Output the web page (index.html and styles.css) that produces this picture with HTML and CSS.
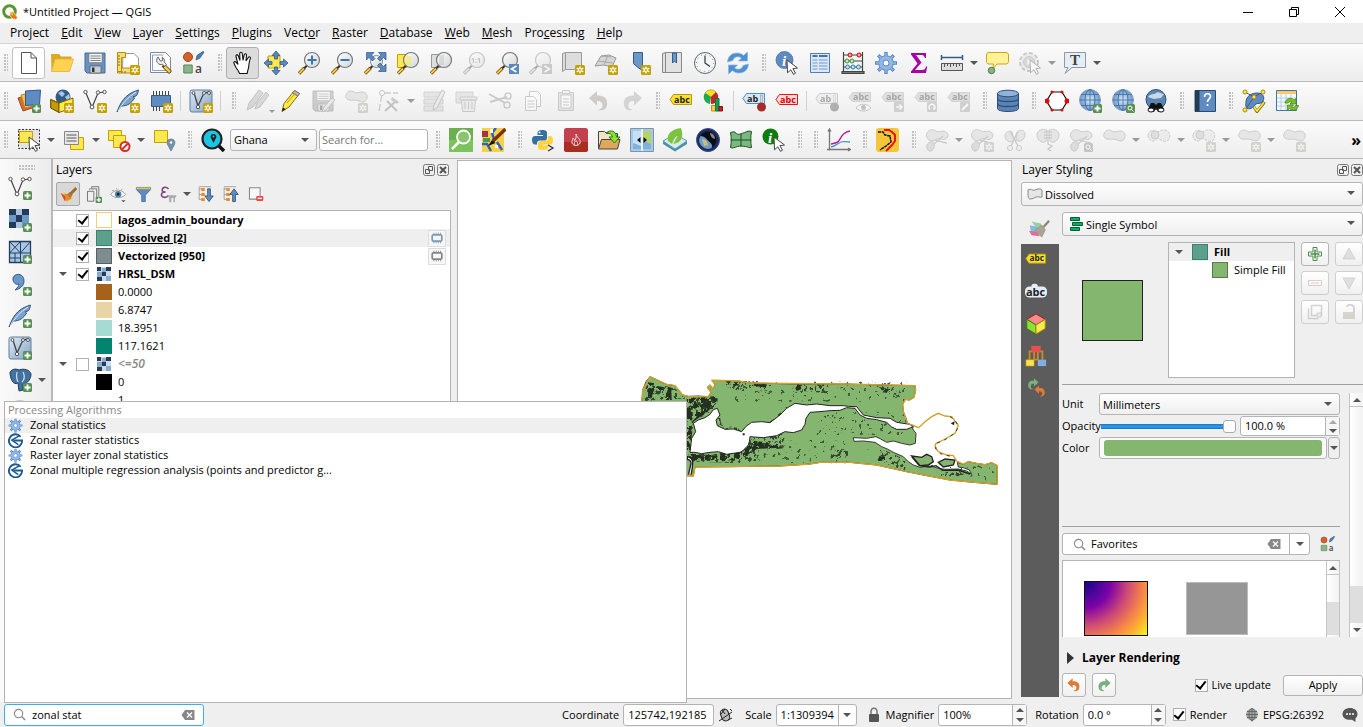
FILE: index.html
```html
<!DOCTYPE html>
<html lang="en">
<head>
<meta charset="utf-8">
<title>*Untitled Project — QGIS</title>
<link rel="stylesheet" href="styles.css">
</head>
<body>
<svg class="paints" aria-hidden="true">
  <defs>
    <linearGradient id="gGlass" x1="0" y1="0" x2="1" y2="1"><stop offset="0" stop-color="#fff"/><stop offset="1" stop-color="#cfd6d8"/></linearGradient>
    <linearGradient id="gBlue" x1="0" y1="0" x2="1" y2="1"><stop offset="0" stop-color="#e3ebf3"/><stop offset="1" stop-color="#7fa3ca"/></linearGradient>
    <radialGradient id="gGlobe"><stop offset="0" stop-color="#e2effc"/><stop offset="1" stop-color="#5f94cf"/></radialGradient>
  </defs>
</svg>
<svg class="sprite" aria-hidden="true">
  <symbol id="b-plus" viewBox="0 0 24 24"><rect x="15" y="15" width="9" height="9" rx="1.5" fill="#5a9056"/><path d="M19.500 16.500v6M16.500 19.500h6" stroke="#fff" stroke-width="1.800"/></symbol>
  <symbol id="b-star" viewBox="0 0 24 24"><rect x="14" y="14" width="10" height="10" rx="1.500" fill="#c4a000"/><path d="M19 15.500v7M15.700 17.200l6.600 3.600M22.300 17.200l-6.600 3.600" stroke="#fff" stroke-width="1.400"/><circle cx="19" cy="19" r="1" fill="#c4a000"/></symbol>
  <symbol id="glass" viewBox="0 0 24 24"><path d="M10 14.500l-3 3" stroke="#333" stroke-width="2.200"/><path d="M7.500 17L2 22.500" stroke="#5c4300" stroke-width="3.200"/><path d="M7 17.500L2.200 22.200" stroke="#f9c440" stroke-width="2"/><circle cx="15" cy="9" r="7.500" fill="url(#gGlass)" stroke="#777" stroke-width="1.200"/></symbol>
  <symbol id="cursor" viewBox="0 0 24 24"><path d="M12 9l10.500 8-4.600.7 2.600 4.500-2 1.200-2.700-4.600-3.300 3z" fill="#fff" stroke="#444"/></symbol>
  <symbol id="new" viewBox="0 0 24 24"><path d="M4.500 1.500h9.500l5.500 5.500v15.500h-15zM14 1.500v5.500h5.500" fill="#fff" stroke="#555"/></symbol>
  <symbol id="open" viewBox="0 0 24 24"><path d="M1 3h8l2 2.500h10.500V8H6L1.500 20z" fill="#d9a928"/><path d="M5 8h18.500L19.500 20.500H1.500z" fill="#ffd351" stroke="#e3b034" stroke-width=".8"/></symbol>
  <symbol id="save" viewBox="0 0 24 24"><path d="M2 2h20v20H4l-2-2z" fill="#6b92bf" stroke="#456c98"/><path d="M6 2.500h13v9H6z" fill="#f4f4f4" stroke="#777" stroke-width=".6"/><path d="M7.500 5h10M7.500 7.300h10M7.500 9.500h10" stroke="#777" stroke-width=".9"/><path d="M7 15h11v7H7z" fill="#c9d0d6" stroke="#555" stroke-width=".7"/><path d="M9 16.500h2.500v4.500H9z" fill="#333"/></symbol>
  <symbol id="layout" viewBox="0 0 24 24"><path d="M7 2.500h11l4.500 4.500v12h-16z" fill="#fff" stroke="#999"/><path d="M1.500 1.500h8v5h-4v14h-4zM5.500 17h13v5h-17v-5" fill="#f7dd77" stroke="#b28b15"/><path d="M2 5h2M2 8h2M2 11h2M2 14h2M6 20v2M9 20v2" stroke="#8a6a10"/></symbol>
  <symbol id="layoutmgr" viewBox="0 0 24 24"><path d="M1.500 1.500h15l5 5v15h-20z" fill="#fff" stroke="#888"/><path d="M3.500 4h11M3.500 4v15.500h15.500" stroke="#7fa2ce" fill="none"/><path d="M14 14l7.500 7.500" stroke="#5c4300" stroke-width="4"/><path d="M15.500 15.500l5.500 5.500" stroke="#f2c75c" stroke-width="2.500"/><path d="M9 6a4.500 4.500 0 0 0 2 7.500c1 .3 1.600 0 2.300-.4l2.200 2.200 2-2-2.300-2.300c.6-2-.2-4-2-4.800l.3 3.300-2 .6z" fill="#eee" stroke="#666"/></symbol>
  <symbol id="style" viewBox="0 0 24 24"><circle cx="6" cy="6" r="4.500" fill="#d4622c" stroke="#a8451a"/><path d="M1.800 14h8.400v8H1.800z" fill="#8ab58a" stroke="#56875a"/><path d="M14 9l4-2 4-6-1-.5-6 4z" fill="#4d7db1" stroke="#335b87" stroke-width=".8"/><text x="13" y="22" class="gl-a">a</text></symbol>
  <symbol id="hand" viewBox="0 0 24 24"><path d="M8.500 22.500c-.5-2-2-3.500-3.500-6L3 12.500c-.8-1.600 1-2.600 2.200-1.200L7 13.500 5 5.500c-.4-1.800 1.700-2.300 2.300-.6L9 9.500 8.700 2.700c0-1.900 2.400-1.900 2.600 0L12 9.300l1.200-5.500c.4-1.700 2.500-1.300 2.300.4L15 10l2.300-3.500c.9-1.400 2.600-.4 2 1.100-1.300 3.400-1.300 5-1.600 8-.2 2.600-1.200 4-1.500 6.900z" fill="#fff" stroke="#111" stroke-width="1.100"/></symbol>
  <symbol id="panall" viewBox="0 0 24 24"><path d="M4 5h12v12H4z" fill="#fce94f" stroke="#c4a000"/><path d="M12 0l4 4.500h-2.500V8h-3V4.500H8zM12 24l4-4.500h-2.500V16h-3v3.500H8zM0 12l4.500-4v2.500H8v3H4.500V16zM24 12l-4.500-4v2.500H16v3h3.500V16z" fill="#5b88bd" stroke="#2f5a8c" stroke-width=".8"/></symbol>
  <symbol id="zin" viewBox="0 0 24 24"><use href="#glass"/><path d="M15 4.500v9M10.500 9h9" stroke="#3f74ae" stroke-width="2"/></symbol>
  <symbol id="zout" viewBox="0 0 24 24"><use href="#glass"/><path d="M10.500 9h9" stroke="#3f74ae" stroke-width="2"/></symbol>
  <symbol id="zfull" viewBox="0 0 24 24"><path d="M10 14.500L7 17.500" stroke="#333" stroke-width="2.200"/><path d="M7.500 17L2 22.500" stroke="#5c4300" stroke-width="3.200"/><path d="M7 17.500L2.200 22.200" stroke="#f9c440" stroke-width="2"/><circle cx="13.500" cy="10.500" r="6" fill="url(#gGlass)" stroke="#888"/><path d="M3.500 1.500H11L8.500 4l3.500 3.500-2.500 2.500L6 6.500 3.500 9zM23 1.500h-7.500L18 4l-3.500 3.500L17 10l3.500-3.500L23 9zM23 20.500h-7.500L18 18l-3.500-3.500L17 12l3.500 3.500L23 13z" fill="#5b88bd" stroke="#2f5a8c" stroke-width=".7"/></symbol>
  <symbol id="zsel" viewBox="0 0 24 24"><path d="M1.500 3.500h9v13h-9z" fill="#fce94f" stroke="#c4a000"/><use href="#glass"/><path d="M9 5h6v9.500a7 7 0 0 1-6-2z" fill="#fce94f" opacity=".6"/></symbol>
  <symbol id="zlay" viewBox="0 0 24 24"><path d="M2.500 3.500h9v13h-9z" fill="#ddd" stroke="#999"/><use href="#glass"/><path d="M10 4h5v10h-5z" fill="#ccc" opacity=".6"/></symbol>
  <symbol id="znat" viewBox="0 0 24 24"><use href="#glass"/><text x="9" y="12" class="gl-s">1:1</text></symbol>
  <symbol id="zlast" viewBox="0 0 24 24"><use href="#glass"/><path d="M14 13h10v10H14z" fill="#5b88bd"/><path d="M21.500 15l-5 3 5 3" fill="none" stroke="#fff" stroke-width="1.600"/></symbol>
  <symbol id="znext" viewBox="0 0 24 24"><use href="#glass"/><path d="M14 13h10v10H14z" fill="#888"/><path d="M16.500 15l5 3-5 3" fill="none" stroke="#fff" stroke-width="1.600"/></symbol>
  <symbol id="mapview" viewBox="0 0 24 24"><path d="M1.500 2.500l3-1h16v17h-16l-3 2z" fill="#ddd" stroke="#999"/><path d="M4.500 1.500v17" stroke="#999"/></symbol>
  <symbol id="map3d" viewBox="0 0 24 24"><path d="M1 15L7 5l8-1 7 3-4 9-8-2z" fill="#d5d5d5" stroke="#999"/><path d="M4 10l15 2M10 14l4-10M7 5l10 1" stroke="#aaa" fill="none"/></symbol>
  <symbol id="bmnew" viewBox="0 0 24 24"><path d="M6.500 1.500h9v18l-4.500-3-4.500-4z" fill="#6b97c9" stroke="#335b87"/></symbol>
  <symbol id="bms" viewBox="0 0 24 24"><path d="M2.500 2.500l3-1h16v20h-19zM5.500 1.500v20" fill="#e2e2e2" stroke="#888"/><path d="M12.500 2h4v10l-2-2-2 2z" fill="#6b97c9" stroke="#335b87"/></symbol>
  <symbol id="clock" viewBox="0 0 24 24"><circle cx="12" cy="12" r="10.500" fill="#f4f7f7" stroke="#666"/><circle cx="12" cy="12" r="8.500" fill="none" stroke="#5b88bd" stroke-dasharray="1 3.450"/><path d="M12 4.500V12l5 3.500" fill="none" stroke="#333" stroke-width="1.200"/></symbol>
  <symbol id="refresh" viewBox="0 0 24 24"><path d="M1.500 11C2 5 6 2 11 2c3 0 5 1 6.500 2.500L21.500 1v9h-9l3-3C12 4.500 7.500 6 7 9.500zM22.500 13c-.5 6-4.500 9-9.500 9-3 0-5-1-6.500-2.500L2.500 23v-9h9l-3 3c3.500 2.500 8 1 8.500-2.500z" fill="#4e8fd0" stroke="#8db7e0" stroke-width=".7"/></symbol>
  <symbol id="info" viewBox="0 0 24 24"><circle cx="9.500" cy="9" r="8.500" fill="#5d8abf" stroke="#456c98" stroke-width=".7"/><text x="7" y="15" class="gl-i">i</text><use href="#cursor"/></symbol>
  <symbol id="table" viewBox="0 0 24 24"><path d="M2.500 2.500h19v19h-19z" fill="#dce8f5" stroke="#4f7fb5"/><path d="M4.500 5h5M11 5h8.500" stroke="#3f74ae" stroke-width="2"/><path d="M4.500 9h5M4.500 12h5M4.500 15h5M4.500 18h5M11 9h8.500M11 12h8.500M11 15h8.500M11 18h8.500" stroke="#6d9bd0" stroke-width="1.200"/></symbol>
  <symbol id="abacus" viewBox="0 0 24 24"><path d="M2.500 1v20M21.500 1v20M1 20.500h22v2H1zM2 4h20M2 10h20M2 16h20" fill="#777" stroke="#444" stroke-width="1.200"/><g fill="#f5a9a9" stroke="#c00"><circle cx="9" cy="4" r="2"/><circle cx="18" cy="4" r="2"/></g><g fill="#c5ecc5" stroke="#3b8b3b"><circle cx="6" cy="10" r="2"/><circle cx="11" cy="10" r="2"/></g><g fill="#bfe3f5" stroke="#2c7ba0"><circle cx="6.500" cy="16" r="2"/><circle cx="12" cy="16" r="2"/><circle cx="17.500" cy="16" r="2"/></g></symbol>
  <symbol id="gear" viewBox="0 0 24 24"><g stroke="#5b88bd" stroke-width="3.400"><path d="M12 1v22M1 12h22M4.200 4.200l15.600 15.600M19.800 4.200L4.200 19.800" /></g><circle cx="12" cy="12" r="7.300" fill="#8fb8e8" stroke="#5b88bd"/><g stroke="#8fb8e8" stroke-width="1.500"><path d="M12 2v20M2 12h20M5 5l14 14M19 5L5 19"/></g><circle cx="12" cy="12" r="3" fill="#fff" stroke="#5b88bd"/></symbol>
  <symbol id="sigma" viewBox="0 0 24 24"><path d="M4 2h15v5h-1.200C17.300 4.800 16.500 4 14.500 4H9l5.500 7.500L8 19h7c2.500 0 3.300-.8 4-3.500h1.200L19 22H4v-1.500l6.500-8L4 3.500z" fill="#a800a8"/></symbol>
  <symbol id="measure" viewBox="0 0 24 24"><path d="M1.500 6.500h21M1.500 4v5M22.500 4v5" stroke="#335b87" stroke-width="1.500"/><path d="M1.500 12.500h21v7h-21z" fill="#ddd" stroke="#555"/><path d="M4.500 13v3M7.500 13v2M10.500 13v3M13.500 13v2M16.500 13v3M19.500 13v2" stroke="#555"/></symbol>
  <symbol id="tip" viewBox="0 0 24 24"><path d="M4 1.500h17c1.500 0 2.500 1 2.500 2.500v6.500c0 1.500-1 2.500-2.500 2.500h-9l-4 5 .5-5H4c-1.500 0-2.500-1-2.500-2.500V4c0-1.500 1-2.500 2.500-2.500z" fill="#fdf19a" stroke="#c9a90f"/><circle cx="6.500" cy="19.500" r="3.200" fill="#85b585" stroke="#4d784f"/></symbol>
  <symbol id="action" viewBox="0 0 24 24"><circle cx="11" cy="11" r="9" fill="#ddd" stroke="#888" stroke-width="2" stroke-dasharray="4 2"/><circle cx="11" cy="11" r="5.500" fill="#aaa" stroke="#888"/><path d="M9.500 8l5 3-5 3z" fill="#fff"/><use href="#cursor"/></symbol>
  <symbol id="textann" viewBox="0 0 24 24"><path d="M1.500 1.500h21v15H9l-7 6 3-6H1.500z" fill="#e6eef5" stroke="#8a9aa8"/><text x="7" y="14" class="gl-t">T</text></symbol>
  <symbol id="dsm" viewBox="0 0 24 24"><path d="M1 9l13-4 4 13-12 4z" fill="#d96b2f" stroke="#a04616"/><path d="M4 6l14-3 3 13-13 3z" fill="#f4c542" stroke="#b08b1c"/><path d="M8.500 2l15-1-1 14.500-14 1z" fill="#5e8cc2" stroke="#335b87"/></symbol>
  <symbol id="gpkg" viewBox="0 0 24 24"><circle cx="13" cy="8" r="7.500" fill="#335b87"/><path d="M8 4l4-2 3 3-3 3zM15 8l4-3 1 4-3 2z" fill="#a8c6e8"/><path d="M.7 10.500L9 14v9.500L.7 19z" fill="#c79a00" stroke="#5a4600"/><path d="M9 14l14-5v9.500l-14 5z" fill="#fce94f" stroke="#7c6400"/><path d="M.7 10.500L9 14l6-2.500" fill="none" stroke="#7c6400"/></symbol>
  <symbol id="vec" viewBox="0 0 24 24"><path d="M2.500 3L9 18.500 15 4l6-1" fill="none" stroke="#444" stroke-width="1.200"/><g fill="#fff" stroke="#555"><circle cx="2.500" cy="3" r="1.700"/><circle cx="9" cy="18" r="1.900"/><circle cx="15" cy="3.500" r="1.700"/><circle cx="21.500" cy="3" r="1.700"/></g></symbol>
  <symbol id="feather" viewBox="0 0 24 24"><path d="M1 23C4 15 8 5 22.500 1c-.5 2-.5 4-2.500 6l-3 .8 1.600 1.200c-3 5-7 8-13 8z" fill="#7ba1cd" stroke="#31557f"/><path d="M2 22C7 14 12 8 20 3" stroke="#dfe9f4" fill="none"/></symbol>
  <symbol id="chip" viewBox="0 0 24 24"><path d="M4.500 2v5M7.500 2v5M10.500 2v5M13.500 2v5M16.500 2v5M19.500 2v5M4.500 17v5M7.500 17v5M10.500 17v5" stroke="#444"/><path d="M2.500 6.500h19v11h-19z" fill="#5e8cc2" stroke="#335b87"/></symbol>
  <symbol id="vbox" viewBox="0 0 24 24"><rect x="1" y="1" width="22" height="22" rx="2" fill="url(#gBlue)" stroke="#5f7f9f"/><path d="M5 4L9 17 15 4l5-1" fill="none" stroke="#444" stroke-width="1.300"/><g fill="#fff" stroke="#555"><circle cx="4.500" cy="4" r="1.500"/><circle cx="9" cy="18" r="1.700"/><circle cx="15" cy="4" r="1.500"/><circle cx="20" cy="4" r="1.500"/></g></symbol>
  <symbol id="pencils" viewBox="0 0 24 24"><path d="M2 21l2-7L14 1l4 3L8 18zM10 20l2-6 9-11 3 3-9 12z" fill="#aaa" stroke="#777"/></symbol>
  <symbol id="pencil" viewBox="0 0 24 24"><path d="M4 22.500l2-8L16.500 1.500l5 3L11 18z" fill="#fce94f" stroke="#8a7100"/><path d="M16.500 1.500l5 3-2 2.500-5-3z" fill="#bbb" stroke="#777"/><path d="M9 14L17.500 4" stroke="#c4a000"/><path d="M4 22.500l1-4 2.800 1.700z" fill="#222"/></symbol>
  <symbol id="savedit" viewBox="0 0 24 24"><use href="#save"/><path d="M11 23l2-5 8-9 3 2-9 10z" fill="#ddd" stroke="#777"/></symbol>
  <symbol id="blob" viewBox="0 0 24 24"><path d="M2 6c1-4 5-5 8-3s5 0 8 0 6 2 5 6-4 5-8 3-7 0-10-1-4-3-3-5z" fill="#ccc" stroke="#888"/></symbol>
  <symbol id="vtool" viewBox="0 0 24 24"><path d="M5 5L2 22M6 4h15" stroke="#888" stroke-width="1.300" stroke-dasharray="8 2"/><circle cx="5" cy="4" r="2.500" fill="#fff" stroke="#777"/><path d="M10 12l10 10M19 12L8 22" stroke="#777" stroke-width="2"/><path d="M15 8l7 5-2 2-6-4z" fill="#888"/></symbol>
  <symbol id="medit" viewBox="0 0 24 24"><path d="M2 3h19v5H2zM2 10h19v5H2zM2 17h19v5H2z" fill="#ccc" stroke="#999"/><path d="M11 21l1-5L20 1l3 2-8 16z" fill="#ddd" stroke="#777"/></symbol>
  <symbol id="trash" viewBox="0 0 24 24"><path d="M1 3h17v11H1z" fill="#ccc" stroke="#999"/><path d="M5 8h17v3H5zM6.500 11h14l-1 11.500h-12z" fill="#ddd" stroke="#888"/><path d="M10 13v7M13.500 13v7M17 13v7" stroke="#888"/></symbol>
  <symbol id="cut" viewBox="0 0 24 24"><path d="M1 5l16 9M2 13l17-5" stroke="#888" stroke-width="2"/><circle cx="20" cy="7" r="3" fill="none" stroke="#888" stroke-width="1.500"/><circle cx="19" cy="16" r="3" fill="none" stroke="#888" stroke-width="1.500"/></symbol>
  <symbol id="copy" viewBox="0 0 24 24"><path d="M8.500 2.500h8l3 3v12h-11z" fill="#fff" stroke="#888"/><path d="M4.500 7.500h8l3 3v11h-11zM6.500 12h7M6.500 15h7M6.500 18h7" fill="#fff" stroke="#888"/></symbol>
  <symbol id="paste" viewBox="0 0 24 24"><path d="M4.500 3.500h15v18h-15z" fill="#ccc" stroke="#888"/><path d="M7 6h10v13H7zM9 10h6M9 13h6M9 16h6" fill="#fff" stroke="#888"/><path d="M8.500 1.500h7v3h-7z" fill="#eee" stroke="#888"/></symbol>
  <symbol id="undo" viewBox="0 0 24 24"><path d="M10 2v4.500c7-.5 11 3 10 9.500-1 5-5 6-9 5 4-1 5-3 4.500-5.500S13 11.500 10 12v4.500L2 9z" fill="#e07b35"/></symbol>
  <symbol id="redo" viewBox="0 0 24 24"><path d="M14 2v4.500C7 6 3 9.500 4 16c1 5 5 6 9 5-4-1-5-3-4.500-5.500S11 11.500 14 12v4.500L22 9z" fill="#79b07e"/></symbol>
  <symbol id="tag" viewBox="0 0 24 24"><path d="M1 10.500l3.500-5h18v10h-18z" fill="#f8e02c" stroke="#b79a08"/><text x="5" y="13.500" class="gl-abc">abc</text></symbol>
  <symbol id="tagred" viewBox="0 0 24 24"><path d="M1 10.500l3.500-5h18v10h-18z" fill="#fdd" stroke="#e11"/><text x="5" y="13.500" class="gl-abc gl-red">abc</text></symbol>
  <symbol id="tagpin" viewBox="0 0 24 24"><path d="M1 9.500l3.500-5h18v10h-18z" fill="#d6e7fb" stroke="#4b8edb"/><text x="5" y="12.500" class="gl-abc">ab</text><path d="M18.500 6h2v9h-2z" fill="#ddd" stroke="#888" stroke-width=".5"/><circle cx="19.500" cy="18" r="4.500" fill="#a62c2c"/></symbol>
  <symbol id="taggrey" viewBox="0 0 24 24"><path d="M1 8.500l3.500-5h18v9h-18z" fill="#bbb" stroke="#999"/><text x="5" y="11" class="gl-abc">abc</text><rect x="13" y="13" width="10" height="10" rx="1" fill="#999"/></symbol>
  <symbol id="tagmove" viewBox="0 0 24 24"><use href="#taggrey"/><path d="M15 18h6M18.500 15.500L21 18l-2.500 2.500" stroke="#fff" fill="none" stroke-width="1.500"/></symbol>
  <symbol id="tagrot" viewBox="0 0 24 24"><use href="#taggrey"/><path d="M16 20.500a3 3 0 1 1 4 0M20 20.500v-3" stroke="#fff" fill="none" stroke-width="1.400"/></symbol>
  <symbol id="tagedit" viewBox="0 0 24 24"><use href="#taggrey"/><path d="M15 21l6-6" stroke="#fff" stroke-width="2"/></symbol>
  <symbol id="tageye" viewBox="0 0 24 24"><path d="M1 8.500l3.500-5h18v9h-18z" fill="#bbb" stroke="#999"/><text x="5" y="11" class="gl-abc">abc</text><path d="M8 19c4-5 11-5 15 0-4 4-11 4-15 0z" fill="#fff" stroke="#777"/><circle cx="15.500" cy="18.500" r="2.500" fill="#777"/></symbol>
  <symbol id="pie" viewBox="0 0 24 24"><path d="M9 8L3 4a7 7 0 0 1 11-1z" fill="#f7e326" stroke="#8a7a00" stroke-width=".5"/><path d="M9 8L3 4a7 7 0 0 0 5 11z" fill="#20a850"/><path d="M9 8l5-5a7 7 0 0 1-5 12z" fill="#c22"/><path d="M9.500 16.500h4V22h-4z" fill="#fc3" stroke="#d38b00"/><path d="M13.500 9.500h3.500V22h-3.500z" fill="#13a04a" stroke="#075"/><path d="M17 17.500h3.500V22H17z" fill="#c22" stroke="#811"/></symbol>
  <symbol id="db" viewBox="0 0 24 24"><path d="M1.500 4.500v15c0 4 21 4 21 0v-15" fill="#5b84b5" stroke="#2c4f7a"/><ellipse cx="12" cy="4.500" rx="10.500" ry="3.300" fill="#93b4da" stroke="#2c4f7a"/><path d="M1.500 9.500c0 4 21 4 21 0M1.500 14.500c0 4 21 4 21 0" fill="none" stroke="#2c4f7a" stroke-width="1.300"/></symbol>
  <symbol id="hex" viewBox="0 0 24 24"><path d="M7 3h10l5.500 9L17 21H7L1.500 12z" fill="#fff" stroke="#111" stroke-width="1.200"/><g fill="#e00"><circle cx="7" cy="3" r="1.500"/><circle cx="17" cy="3" r="1.500"/><circle cx="22" cy="12" r="2.500"/><circle cx="17" cy="21" r="1.500"/><circle cx="7" cy="21" r="1.500"/><circle cx="2" cy="12" r="2.500"/></g></symbol>
  <symbol id="globe" viewBox="0 0 24 24"><circle cx="12" cy="11" r="10.500" fill="url(#gGlobe)" stroke="#9aa7b5"/><ellipse cx="12" cy="11" rx="5" ry="10.500" fill="none" stroke="#47729f"/><path d="M12 .5v21M1.500 11h21M3 5.500h18M3 16.500h18" stroke="#47729f" stroke-width=".9"/></symbol>
  <symbol id="b-mag" viewBox="0 0 24 24"><rect x="15" y="15" width="9" height="9" rx="1.500" fill="#5a9056"/><circle cx="19" cy="19" r="2" fill="none" stroke="#fff"/><path d="M20.500 20.500l2 2" stroke="#fff"/></symbol>
  <symbol id="binoc" viewBox="0 0 24 24"><circle cx="12" cy="10.500" r="10" fill="#5b84b5" stroke="#2c4f7a"/><path d="M4 8c3-4 6-2 8-4s5 1 8 1l-3 4-7 1z" fill="#c9d8e8"/><path d="M4 20l3-6h3l2 2 2-2h3l3 6-2 3h-4l-2-4-2 4H6z" fill="#111"/><ellipse cx="7" cy="21" rx="3" ry="2" fill="#fff" stroke="#111"/><ellipse cx="17" cy="21" rx="3" ry="2" fill="#fff" stroke="#111"/></symbol>
  <symbol id="help" viewBox="0 0 24 24"><path d="M2 1.500h20.500v21H2z" fill="#5e8cc2" stroke="#2f4a66"/><path d="M2 1.500h4.500v21H2z" fill="#233b55"/><path d="M11.500 8c0-4.500 6-4 6-.7 0 2.500-3 2.500-3 5.700M14.500 15v2" fill="none" stroke="#fff" stroke-width="1.700"/></symbol>
  <symbol id="topo" viewBox="0 0 24 24"><path d="M4 13c0-6 6-9 11-9 6 0 8 4 6 8s-6 1-8 4-6 5-8 3-1-4-1-6z" fill="#5e8cc2" stroke="#335b87"/><path d="M3 3l9 5 9-5M12 8L3 21" fill="none" stroke="#557"/><g fill="#fce94f" stroke="#a98c00"><circle cx="3" cy="3" r="2"/><circle cx="21" cy="3" r="2"/><circle cx="12" cy="8" r="2"/><circle cx="3" cy="21" r="2"/></g><path d="M12 18l3 4.500L22.500 13" fill="none" stroke="#8a7100" stroke-width="3"/><path d="M12 18l3 4L22 13.500" fill="none" stroke="#fce94f" stroke-width="1.500"/></symbol>
  <symbol id="reload" viewBox="0 0 24 24"><path d="M1.500 1.500h20v20h-20z" fill="#f4f9fd" stroke="#3f74ae"/><path d="M2 2h19v3H2z" fill="#ffc66b"/><path d="M6 5v16M11 5v16M16 5v16M2 9h19M2 13h19M2 17h19" stroke="#b8cfe6"/><path d="M10 14c1-5 6-6 9-3l2-1.500V15h-6l2-2c-2-1-3-.5-4 1zM23.500 16.500c-1 5-6 6-9 3l-2 2V16h6l-2 2c2 1 3 .5 4-1.500z" fill="#7cc32b" stroke="#3f7d0a" stroke-width=".7"/></symbol>
  <symbol id="selrect" viewBox="0 0 24 24"><path d="M1.500 1.500h21v19h-21z" fill="#e4e4e4" stroke="#333" stroke-dasharray="2 1.500"/><path d="M2.500 3.500h13v11h-13z" fill="#fce94f" stroke="#c4a000"/><use href="#cursor"/></symbol>
  <symbol id="selform" viewBox="0 0 24 24"><path d="M8.500 9.500h13v12h-13z" fill="#fce94f" stroke="#c4a000"/><path d="M2.500 3.500h14v13h-14z" fill="#e8e8e8" stroke="#888"/><path d="M4.500 7h10M4.500 10h10M4.500 13h10" stroke="#888" stroke-width="1.500"/></symbol>
  <symbol id="desel" viewBox="0 0 24 24"><path d="M1.500 2.500h13v10h-13z" fill="#fce94f" stroke="#c4a000"/><path d="M6.500 7.500h12v12h-12z" fill="#fce94f" stroke="#c4a000"/><circle cx="18" cy="18.500" r="4.500" fill="#fff" stroke="#dc2a2a" stroke-width="2"/><path d="M15 21.500l6-6" stroke="#dc2a2a" stroke-width="2"/></symbol>
  <symbol id="selloc" viewBox="0 0 24 24"><path d="M2.500 2.500h13v12h-13z" fill="#fce94f" stroke="#c4a000"/><path d="M19 11c3.500 0 4.500 3 3.500 5.500L19 23l-3.500-6.500C14.500 14 15.500 11 19 11z" fill="#7393ab" stroke="#4e6c84" stroke-width=".6"/><circle cx="19" cy="14.500" r="1.300" fill="#fff"/></symbol>
  <symbol id="osmsearch" viewBox="0 0 24 24"><path d="M17 17l6 6" stroke="#111" stroke-width="3.500"/><circle cx="11" cy="11" r="9.500" fill="#1cc5e3" stroke="#222" stroke-width="2.200"/><path d="M12.500 6c2.500 0 3.500 2.500 2.500 4l-2.500 5-2.500-5c-1-1.500 0-4 2.500-4z" fill="#222"/><circle cx="12.500" cy="8.500" r="1" fill="#1cc5e3"/></symbol>
  <symbol id="gsearch" viewBox="0 0 24 24"><path d="M0 0h24v24H0z" fill="#6ab04c"/><path d="M0 12h24v12H0z" fill="#89cf6b" opacity=".6"/><path d="M10 14l-7 7" stroke="#fff" stroke-width="2.500"/><circle cx="14.500" cy="9" r="6.500" fill="#8ac46f" stroke="#fff" stroke-width="1.800"/></symbol>
  <symbol id="osm" viewBox="0 0 24 24"><path d="M0 0h22v24H0z" fill="#f6d24a"/><path d="M0 3h6v6H0z" fill="#a3344d"/><path d="M1 10h7v4H1z" fill="#4b9a54"/><path d="M14 0l-4 5 2 6M0 16h5l4 7M15 14l5 8" fill="none" stroke="#2b63c4" stroke-width="2.500"/><path d="M8 1h3v4H8zM13 17h3v3h-3z" fill="#fff"/><path d="M11 13L23.500 1" stroke="#7c3212" stroke-width="3.500"/><path d="M6 18l4-6 3.500 3z" fill="#111"/></symbol>
  <symbol id="python" viewBox="0 0 24 24"><path d="M11 2c4 0 5 1 5 3v5c0 2-1 2.500-3 2.500H9c-2 0-3 1-3 3v1H4c-2 0-3-2-3-4.500S2 8 4 8h8V7H6.500V4.500C6.500 3 8 2 11 2z" fill="#3670a3"/><path d="M12 22c-4 0-5-1-5-3v-3c0-2 1-3 3-3h4c2 0 3-1 3-3V8h2c2 0 3 2 3 4.500s-1 4-3 4h-7v1h5V20c0 1-2 2-5 2z" fill="#ffd43b"/><circle cx="8.500" cy="4.500" r="1" fill="#fff"/><path d="M17 17l5 3-5 3" stroke="#333" fill="none" stroke-width="1.300"/></symbol>
  <symbol id="flame" viewBox="0 0 24 24"><rect width="24" height="24" rx="2.500" fill="#c3404f"/><path d="M0 14h24v7.500c0 1.500-1 2.500-2.500 2.500h-19C1 24 0 23 0 21.500z" fill="#a92d21"/><path d="M12 6c1 4 5 5 4 9-.7 3-7 3.500-8 0-.5-2 1-3 1-5 1 .6 1.500 1.500 1.500 2.500C12 11 12.500 9 12 6zM12 12.500c-2.500 2.500-2 5 0 5s2.500-2 0-5z" fill="none" stroke="#f7dcd8"/></symbol>
  <symbol id="folderg" viewBox="0 0 24 24"><path d="M1.500 3.500h6l2 2h11v14h-19z" fill="#f0e6c4" stroke="#444"/><path d="M4.500 11.500h18.500l-2.500 9.500h-19z" fill="#e0a75a" stroke="#444"/><path d="M9 5c5-4 10-2 10.500 4H23l-5.500 6L12 9h3.500C15 6 12 4.500 9 5z" fill="#8ae234" stroke="#2d7a0a"/></symbol>
  <symbol id="swipe" viewBox="0 0 24 24"><path d="M.5.500h23v23H.5z" fill="#a9c8e6" stroke="#7b95ac"/><path d="M3 3h8v18H3z" fill="#c5e0f5"/><path d="M13 3h8v18h-8z" fill="#b5d468"/><path d="M3 15l8 3v3H3zM13 12l8 4v5h-8z" fill="#7fb2db"/><path d="M12 1v22" stroke="#fff" stroke-width="1.500"/><path d="M10.500 9v6L7 12zM13.500 9v6l3.500-3z" fill="#111"/></symbol>
  <symbol id="leaf" viewBox="0 0 24 24"><path d="M0 16l12 7.500L24 16v-2l-12-3-12 3z" fill="#4b8fa8"/><path d="M0 13l12 8 12-8-12-7z" fill="#d8ecee" stroke="#5a9cae"/><path d="M5 13C3 5 10 1 18 0c3 8 1 15-8 16 2-3 3-5 5-9-4 3-5 6-6 9z" fill="#7fc241"/></symbol>
  <symbol id="earth" viewBox="0 0 24 24"><circle cx="12" cy="12" r="11.500" fill="#1d2a5c" stroke="#3d4f8a"/><circle cx="12" cy="12" r="8.500" fill="#0b0d16"/><path d="M4.500 8a8.500 8.500 0 0 0 11 12c2-3-1-5-3-7s-4-5-8-5z" fill="#6a9cc9"/><path d="M6 11l4 1 2 5-4 1z" fill="#d3bd6d"/><path d="M14 5c3 0 5 3 5 6-2 0-5-3-5-6z" fill="#888"/></symbol>
  <symbol id="bowtie" viewBox="0 0 24 24"><path d="M1.500 4.500c3-1 4-1 6 1s5 0 8-1 4-2 7-1c-1 5-1 11 0 16-2 1-4-1-6-1-3 0-5-1-8 0s-5 2-7 1c1-5 1-10 0-15z" fill="#79b87e" stroke="#234d28"/><path d="M1.500 12h21M12 5.500v13" stroke="#234d28"/></symbol>
  <symbol id="ginfo" viewBox="0 0 24 24"><circle cx="8.500" cy="8.500" r="8" fill="#0d7d0d"/><text x="6" y="14.500" class="gl-i">i</text><use href="#cursor"/></symbol>
  <symbol id="plot" viewBox="0 0 24 24"><path d="M2.500 1v21.500M0 21.500h23M1 3.500l1.500-2.500L4 3.500M21 20l2.500 1.500L21 23" fill="none" stroke="#777" stroke-width="1.300"/><path d="M4 16c5-1 7-1 9-5s4-7 10-8" fill="none" stroke="#b3189b" stroke-width="1.500"/><path d="M4 19c5-1 7-4 10-5s4 0 9 0" fill="none" stroke="#4a9ac4" stroke-width="1.300"/></symbol>
  <symbol id="path" viewBox="0 0 24 24"><rect width="23" height="24" rx="3" fill="#f6c63a"/><path d="M8 2h5l3 2 3 3v6l-3 4-6 6" fill="none" stroke="#e11" stroke-width="2"/><path d="M2 4h5l2 3 5 1 1 6-5 4-6 4" fill="none" stroke="#111" stroke-width="1.500" stroke-dasharray="3 .6"/></symbol>
  <symbol id="blobs" viewBox="0 0 24 24"><path d="M2 5c2-4 6-4 9-2s8-2 11 2-2 8-6 6-6 2-9 2-7-4-5-8z" fill="#ccc" stroke="#888"/><path d="M2 17c2-4 6-4 7-2s0 7-3 8-5-3-4-6z" fill="#bbb" stroke="#888"/><path d="M10 12c4 1 8 3 12 3M9 16l9-8" fill="none" stroke="#888" stroke-width="1.300"/></symbol>
  <symbol id="scissor" viewBox="0 0 24 24"><path d="M2 8c0-4 4-6 7-4l2 8c-3 4-9 1-9-4zM22 6c0-4-5-5-8-2l-1 8c4 3 9 0 9-6z" fill="#ccc" stroke="#888"/><path d="M7 3l8 15M15 3L8 18" stroke="#888" stroke-width="1.500"/><circle cx="7" cy="20" r="2.500" fill="#eee" stroke="#888"/><circle cx="16" cy="20" r="2.500" fill="#eee" stroke="#888"/></symbol>
  <symbol id="stitch" viewBox="0 0 24 24"><path d="M1 7c0-5 6-7 10-5v10c-3 5-10 1-10-5zM23 7c0-5-6-7-10-5v10c3 5 10 1 10-5z" fill="#ccc" stroke="#888"/><path d="M8 4h8M8 7h8M8 10h8M12 12v4l4 2-4 3 3 2" fill="none" stroke="#888" stroke-width="1.300"/></symbol>
  <symbol id="cells" viewBox="0 0 24 24"><path d="M1 8c0-5 5-7 8-5s5-2 9-1 6 5 4 9-7 2-10 0-4 3-7 2-4-3-4-5z" fill="#ddd" stroke="#888" stroke-dasharray="3 1"/><circle cx="8" cy="7" r="4" fill="#bbb" stroke="#888"/></symbol>
  <symbol id="rast" viewBox="0 0 24 24"><path d="M1 1h20v19H1z" fill="#6b97c9"/><path d="M1 1h7v6H1zM14 1h7v6h-7zM8 7h6v7H8zM1 14h7v6H1z" fill="#223b59"/><path d="M8 14h6v6H8zM8 1h6v6H8z" fill="#a9c3e0"/></symbol>
  <symbol id="mesh" viewBox="0 0 24 24"><path d="M1.500 1.500h21v21h-21z" fill="#a9c6e8" stroke="#24405f" stroke-width="1.300"/><path d="M1.500 13h21M12.500 1.500v21M1.500 1.500l11 11.500M1.500 13l11-11.500M12.500 13l10-11.500M7 13v10M1.500 18h11" stroke="#24405f" fill="none"/></symbol>
  <symbol id="comma" viewBox="0 0 24 24"><path d="M5 7c0-6 11-7 11 2 0 5-4 8-9 9 3-3 4-4 4-6-3 1-6-1-6-5z" fill="#6b97c9" stroke="#335b87"/></symbol>
  <symbol id="pg" viewBox="0 0 24 24"><path d="M2 4c3-4 7-3 9-2 5-2 11 0 12 4 0 5-3 8-5 9l-3 1v6l-4 1-1-8c-5 3-8-5-8-11z" fill="#44729f" stroke="#1f3f60"/><path d="M9 4c-1 5 0 8 1 10M15 4c2 4 1 8-1 10" fill="none" stroke="#cfe0f0" stroke-width="1.200"/></symbol>
  <symbol id="brush" viewBox="0 0 24 24"><path d="M1 10l11 1 6 7-9 5z" fill="#e9cf3d"/><path d="M1 10l6 12 2-7z" fill="#d44"/><path d="M6 11l7 1 3 6-7 3z" fill="#e58a34"/><path d="M10 12l4-4 4 4-3 5z" fill="#b07936"/><path d="M15 11l8-8" stroke="#a06a33" stroke-width="4"/></symbol>
  <symbol id="brush2" viewBox="0 0 24 24"><path d="M4 5l10 2 3 5-6 3z" fill="#9ccf9e"/><path d="M2 9l8 2-1 6-6-2z" fill="#7dbbe0"/><path d="M1 15l9 1 3 5-9-1z" fill="#dd6f93"/><path d="M8 14l7-5 4 5-4 8z" fill="#a8a594" stroke="#8c8874" stroke-width=".6"/><path d="M17 11l6-7" stroke="#8c8874" stroke-width="2.500"/></symbol>
  <symbol id="addgrp" viewBox="0 0 24 24"><path d="M3.500 7.500h9v14h-9zM6.500 5v-1h10v12M9.500 3V1h10v14" fill="none" stroke="#777" stroke-width="1.400"/></symbol>
  <symbol id="eye" viewBox="0 0 24 24"><path d="M1 12C6 4 17 4 22 12c-5 6-16 6-21 0z" fill="#f4f4f4" stroke="#888"/><circle cx="11.500" cy="11.500" r="4.500" fill="#55809f"/><circle cx="11.500" cy="11.500" r="1.800" fill="#123"/><path d="M3 6l3 1M9 3l1 2M17 4l-1 2" stroke="#888"/><path d="M16 20h6l-3 3z" fill="#555"/></symbol>
  <symbol id="funnel" viewBox="0 0 24 24"><path d="M2 2h20v3l-7.500 8v9h-5v-9L2 5z" fill="#5e8cc2" stroke="#335b87"/><path d="M2 2h20v2.500H2z" fill="#e2c14b"/></symbol>
  <symbol id="eps" viewBox="0 0 24 24"><path d="M12 4C8 0 3 2 3 5.500 3 8 6 8.500 8 8.500c-3 0-6 1-6 4 0 4 7 5 10 1" fill="none" stroke="#7d4a7d" stroke-width="2.200"/><path d="M11 13h12v2l-2 2v6h-2v-6h-3v6h-3v-6l-2-2z" fill="#aaa"/></symbol>
  <symbol id="expand" viewBox="0 0 24 24"><path d="M3 2v17M3 4h7M3 12h5M3 19h7M3 1h17" stroke="#888" fill="none"/><path d="M6 3h5v4H6zM6 10h5v4H6zM6 17h5v4H6z" fill="#f08a24"/><path d="M15 4h4v10h4l-6 8-6-8h4z" fill="#5e8cc2" stroke="#24405f"/></symbol>
  <symbol id="collapse" viewBox="0 0 24 24"><path d="M3 2v17M3 4h7M3 12h5M3 19h7M3 1h17" stroke="#888" fill="none"/><path d="M6 3h5v4H6zM6 10h5v4H6zM6 17h5v4H6z" fill="#f08a24"/><path d="M15 22h4V12h4l-6-8-6 8h4z" fill="#5e8cc2" stroke="#24405f"/></symbol>
  <symbol id="remove" viewBox="0 0 24 24"><path d="M3.500 2.500h15v16h-15z" fill="#f8f8f8" stroke="#888" stroke-width="1.500"/><rect x="13" y="14" width="10" height="7" rx="1.500" fill="#e44"/><path d="M15 17.500h6" stroke="#fff" stroke-width="2"/></symbol>
  <symbol id="chipo" viewBox="0 0 16 16"><rect x="2.500" y="4.500" width="11" height="7" rx="1.500" fill="none" stroke="currentColor" stroke-width="2"/><path d="M4.500 2v2M7 2v2M9.500 2v2M12 2v2M4.500 12v2M7 12v2M9.500 12v2M12 12v2" stroke="currentColor"/></symbol>
  <symbol id="checker" viewBox="0 0 14 14"><path d="M0 0h14v14H0z" fill="#c8daee"/><path d="M0 0h4v4H0zM9 0h5v4H9zM5 5h4v4H5zM0 10h5v4H0z" fill="#2a3b50"/><path d="M5 1h4v4H5zM0 5h5v5H0zM9 9h5v5H9z" fill="#89a9cf"/></symbol>
  <symbol id="float" viewBox="0 0 12 12"><rect x=".5" y=".5" width="11" height="11" rx="2" fill="none" stroke="#777"/><path d="M5.500 2.500h4v4h-4zM2.500 5.500h4v4h-4z" fill="#efefef" stroke="#555"/></symbol>
  <symbol id="close" viewBox="0 0 12 12"><rect x=".5" y=".5" width="11" height="11" rx="2" fill="none" stroke="#777"/><path d="M3 3l6 6M9 3L3 9" stroke="#555" stroke-width="2"/></symbol>
  <symbol id="mag" viewBox="0 0 14 14"><circle cx="6" cy="6" r="4.500" fill="none" stroke="#888" stroke-width="1.200"/><path d="M9.500 9.500L13 13" stroke="#888" stroke-width="1.600"/></symbol>
  <symbol id="clear" viewBox="0 0 14 12"><path d="M4 1h9.500v10H4L.5 6z" fill="#888"/><path d="M6 3.500l5 5M11 3.500l-5 5" stroke="#fff" stroke-width="1.200"/></symbol>
  <symbol id="abcw" viewBox="0 0 24 24"><rect y="6" width="24" height="12" rx="5" fill="#e6edfa"/><rect x="7" y="3" width="7" height="8" rx="3" fill="#e6edfa"/><text x="1" y="16" class="gl-abcb">abc</text></symbol>
  <symbol id="cube" viewBox="0 0 24 24"><path d="M12 1l10 6-10 6L2 7z" fill="#f58b8b" stroke="#b11"/><path d="M2 7l10 6v10L2 17z" fill="#8ae234" stroke="#3d7a0b"/><path d="M22 7l-10 6v10l10-6z" fill="#fce94f" stroke="#a98c00"/></symbol>
  <symbol id="hist" viewBox="0 0 24 24"><path d="M9 7H5v10M10 7v9h4V7M15 7h4v10" stroke="#c98a2b" stroke-width="2" fill="none"/><path d="M7 1h10v7H7z" fill="#e85050"/><path d="M1 16h9v7H1z" fill="#fce04f" stroke="#a98c00" stroke-width=".6"/><path d="M14 16h9v7h-9z" fill="#7faee6"/></symbol>
  <symbol id="poly" viewBox="0 0 16 12"><path d="M1 2c3-2 4 1 7 0s5-2 7 0v7c-2 1-4-1-6 0s-4 2-6 2-2-3-2-9z" fill="#e6e6e6" stroke="#888"/></symbol>
  <symbol id="single" viewBox="0 0 14 14"><g fill="#00b360" stroke="#075c36"><path d="M1.500.5h9v3h-9zM3.500 5.500h10v3h-10zM1.500 10.500h9v3h-9z"/></g></symbol>
  <symbol id="saga" viewBox="0 0 16 16"><path d="M13.500 4A7 7 0 1 0 15 8H6" fill="none" stroke="#1d5a8e" stroke-width="2"/><path d="M12 3L4 7.500l7 5" stroke="#1d5a8e" stroke-width="1.600" fill="none"/></symbol>
</svg>

<header class="title-bar">
  <svg class="logo" viewBox="0 0 16 16"><circle cx="7.500" cy="7.500" r="5.800" fill="none" stroke="#589632" stroke-width="3"/><path d="M8 8h3.500l4 5.500-1.500 2-3-.5L8 12z" fill="#ee7913" stroke="#fff" stroke-width=".6"/><path d="M8 8l3 3" stroke="#f5d04c" stroke-width="1.500"/></svg>
  <h1>*Untitled Project — QGIS</h1>
  <div class="win-buttons">
    <button aria-label="Minimize"><svg viewBox="0 0 12 12"><path d="M1 6.500h10" stroke="#000"/></svg></button>
    <button aria-label="Restore"><svg viewBox="0 0 12 12"><path d="M1.500 3.500h7v7h-7zM3.500 3.500v-2h7v7h-2" fill="none" stroke="#000"/></svg></button>
    <button aria-label="Close"><svg viewBox="0 0 12 12"><path d="M1 1l10 10M11 1L1 11" stroke="#000"/></svg></button>
  </div>
</header>
<nav class="menu-bar">
  <button>Pro<u>j</u>ect</button><button><u>E</u>dit</button><button><u>V</u>iew</button><button><u>L</u>ayer</button><button><u>S</u>ettings</button><button><u>P</u>lugins</button><button>Vect<u>o</u>r</button><button><u>R</u>aster</button><button><u>D</u>atabase</button><button><u>W</u>eb</button><button><u>M</u>esh</button><button>Pro<u>c</u>essing</button><button><u>H</u>elp</button>
</nav>

<div class="toolbar">
  <i class="grip"></i>
  <button class="tb framed"><svg><use href="#new"/></svg></button>
  <button class="tb"><svg><use href="#open"/></svg></button>
  <button class="tb"><svg><use href="#save"/></svg></button>
  <button class="tb"><svg><use href="#layout"/><use href="#b-star"/></svg></button>
  <button class="tb"><svg><use href="#layoutmgr"/></svg></button>
  <button class="tb"><svg><use href="#style"/></svg></button>
  <i class="grip"></i>
  <button class="tb pressed"><svg><use href="#hand"/></svg></button>
  <button class="tb"><svg><use href="#panall"/></svg></button>
  <button class="tb"><svg><use href="#zin"/></svg></button>
  <button class="tb"><svg><use href="#zout"/></svg></button>
  <button class="tb"><svg><use href="#zfull"/></svg></button>
  <button class="tb"><svg><use href="#zsel"/></svg></button>
  <button class="tb"><svg><use href="#zlay"/></svg></button>
  <button class="tb off"><svg><use href="#znat"/></svg></button>
  <button class="tb"><svg><use href="#zlast"/></svg></button>
  <button class="tb off"><svg><use href="#znext"/></svg></button>
  <button class="tb"><svg><use href="#mapview"/><use href="#b-star"/></svg></button>
  <button class="tb"><svg><use href="#map3d"/><use href="#b-star"/></svg></button>
  <button class="tb"><svg><use href="#bmnew"/><use href="#b-star"/></svg></button>
  <button class="tb"><svg><use href="#bms"/></svg></button>
  <button class="tb"><svg><use href="#clock"/></svg></button>
  <button class="tb"><svg><use href="#refresh"/></svg></button>
  <i class="grip"></i>
  <button class="tb"><svg><use href="#info"/></svg></button>
  <button class="tb"><svg><use href="#table"/></svg></button>
  <button class="tb"><svg><use href="#abacus"/></svg></button>
  <button class="tb"><svg><use href="#gear"/></svg></button>
  <button class="tb"><svg><use href="#sigma"/></svg></button>
  <button class="tb drop"><svg><use href="#measure"/></svg></button>
  <button class="tb"><svg><use href="#tip"/></svg></button>
  <button class="tb drop off"><svg><use href="#action"/></svg></button>
  <button class="tb drop"><svg><use href="#textann"/></svg></button>
</div>
<div class="toolbar">
  <i class="grip"></i>
  <button class="tb"><svg><use href="#dsm"/><use href="#b-plus"/></svg></button>
  <button class="tb"><svg><use href="#gpkg"/><use href="#b-star"/></svg></button>
  <button class="tb"><svg><use href="#vec"/><use href="#b-star"/></svg></button>
  <button class="tb"><svg><use href="#feather"/><use href="#b-star"/></svg></button>
  <button class="tb"><svg><use href="#chip"/><use href="#b-star"/></svg></button>
  <i class="sep"></i>
  <button class="tb"><svg><use href="#vbox"/><use href="#b-star"/></svg></button>
  <i class="sep"></i><i class="grip"></i>
  <button class="tb mini off"><svg><use href="#pencils"/></svg></button>
  <button class="tb"><svg><use href="#pencil"/></svg></button>
  <button class="tb off"><svg><use href="#savedit"/></svg></button>
  <button class="tb off"><svg><use href="#blob"/><use href="#b-star"/></svg></button>
  <button class="tb drop off"><svg><use href="#vtool"/></svg></button>
  <button class="tb off"><svg><use href="#medit"/></svg></button>
  <button class="tb off"><svg><use href="#trash"/></svg></button>
  <button class="tb off"><svg><use href="#cut"/></svg></button>
  <button class="tb off"><svg><use href="#copy"/></svg></button>
  <button class="tb off"><svg><use href="#paste"/></svg></button>
  <button class="tb off"><svg><use href="#undo"/></svg></button>
  <button class="tb off"><svg><use href="#redo"/></svg></button>
  <i class="grip"></i>
  <button class="tb"><svg><use href="#tag"/></svg></button>
  <button class="tb"><svg><use href="#pie"/></svg></button>
  <i class="sep"></i>
  <button class="tb"><svg><use href="#tagpin"/></svg></button>
  <button class="tb"><svg><use href="#tagred"/></svg></button>
  <i class="sep"></i>
  <button class="tb off"><svg><use href="#tagpin"/></svg></button>
  <button class="tb off"><svg><use href="#tageye"/></svg></button>
  <button class="tb off"><svg><use href="#tagmove"/></svg></button>
  <button class="tb off"><svg><use href="#tagrot"/></svg></button>
  <button class="tb off"><svg><use href="#tagedit"/></svg></button>
  <i class="grip"></i>
  <button class="tb"><svg><use href="#db"/></svg></button>
  <i class="grip"></i>
  <button class="tb"><svg><use href="#hex"/></svg></button>
  <button class="tb"><svg><use href="#globe"/><use href="#b-plus"/></svg></button>
  <button class="tb"><svg><use href="#globe"/><use href="#b-mag"/></svg></button>
  <button class="tb"><svg><use href="#binoc"/></svg></button>
  <i class="grip"></i>
  <button class="tb"><svg><use href="#help"/></svg></button>
  <i class="grip"></i>
  <button class="tb"><svg><use href="#topo"/></svg></button>
  <button class="tb"><svg><use href="#reload"/></svg></button>
</div>
<div class="toolbar last">
  <i class="grip"></i>
  <button class="tb drop"><svg><use href="#selrect"/></svg></button>
  <button class="tb drop"><svg><use href="#selform"/></svg></button>
  <button class="tb drop"><svg><use href="#desel"/></svg></button>
  <button class="tb"><svg><use href="#selloc"/></svg></button>
  <i class="grip"></i>
  <button class="tb"><svg><use href="#osmsearch"/></svg></button>
  <div class="combo country"><select aria-label="Country"><option>Ghana</option></select></div>
  <input class="field search-for" type="text" placeholder="Search for..." aria-label="Search for">
  <i class="grip"></i>
  <button class="tb"><svg><use href="#gsearch"/></svg></button>
  <button class="tb"><svg><use href="#osm"/></svg></button>
  <i class="grip"></i>
  <button class="tb"><svg><use href="#python"/></svg></button>
  <button class="tb"><svg><use href="#flame"/></svg></button>
  <button class="tb"><svg><use href="#folderg"/></svg></button>
  <button class="tb"><svg><use href="#swipe"/></svg></button>
  <button class="tb"><svg><use href="#leaf"/></svg></button>
  <button class="tb"><svg><use href="#earth"/></svg></button>
  <button class="tb"><svg><use href="#bowtie"/></svg></button>
  <button class="tb"><svg><use href="#ginfo"/></svg></button>
  <i class="grip"></i><i class="grip"></i>
  <button class="tb"><svg><use href="#plot"/></svg></button>
  <i class="grip"></i>
  <button class="tb"><svg><use href="#path"/></svg></button>
  <i class="grip"></i>
  <button class="tb drop off"><svg><use href="#blobs"/></svg></button>
  <button class="tb off"><svg><use href="#blobs"/><use href="#b-star"/></svg></button>
  <button class="tb off"><svg><use href="#scissor"/></svg></button>
  <button class="tb off"><svg><use href="#stitch"/></svg></button>
  <button class="tb off"><svg><use href="#blobs"/><use href="#b-mag"/></svg></button>
  <button class="tb drop off"><svg><use href="#blob"/></svg></button>
  <button class="tb drop off"><svg><use href="#cells"/></svg></button>
  <button class="tb drop off"><svg><use href="#cells"/><use href="#b-star"/></svg></button>
  <button class="tb drop off"><svg><use href="#blob"/><use href="#b-star"/></svg></button>
  <button class="tb off"><svg><use href="#blob"/><use href="#b-star"/></svg></button>
  <button class="more">»</button>
</div>

<main class="workspace">
  <aside class="side-tools">
    <i class="grip-h"></i>
    <button class="sb"><svg><use href="#vec"/><use href="#b-plus"/></svg></button>
    <button class="sb"><svg><use href="#rast"/><use href="#b-plus"/></svg></button>
    <button class="sb"><svg><use href="#mesh"/><use href="#b-plus"/></svg></button>
    <button class="sb"><svg><use href="#comma"/><use href="#b-plus"/></svg></button>
    <button class="sb"><svg><use href="#feather"/><use href="#b-plus"/></svg></button>
    <button class="sb"><svg><use href="#vbox"/><use href="#b-plus"/></svg></button>
    <button class="sb drop"><svg><use href="#pg"/><use href="#b-plus"/></svg></button>
    <button class="sb"><svg><use href="#db"/></svg></button>
  </aside>

  <section class="layers">
    <div class="dock-title"><h2>Layers</h2><button aria-label="Float"><svg><use href="#float"/></svg></button><button aria-label="Close"><svg><use href="#close"/></svg></button></div>
    <div class="layer-tools">
      <button class="lt pressed"><svg><use href="#brush"/></svg></button>
      <button class="lt"><svg><use href="#addgrp"/><use href="#b-plus"/></svg></button>
      <button class="lt"><svg><use href="#eye"/></svg></button>
      <button class="lt"><svg><use href="#funnel"/></svg></button>
      <button class="lt drop"><svg><use href="#eps"/></svg></button>
      <button class="lt"><svg><use href="#expand"/></svg></button>
      <button class="lt"><svg><use href="#collapse"/></svg></button>
      <button class="lt"><svg><use href="#remove"/></svg></button>
    </div>
    <ul class="tree">
      <li><span class="arrow"></span><label><input type="checkbox" checked><span class="sw outline"></span><b>lagos_admin_boundary</b></label></li>
      <li class="current"><span class="arrow"></span><label><input type="checkbox" checked><span class="sw teal"></span><b><u>Dissolved [2]</u></b></label><button class="mem blue" aria-label="Temporary layer"><svg><use href="#chipo"/></svg></button></li>
      <li><span class="arrow"></span><label><input type="checkbox" checked><span class="sw slate"></span><b>Vectorized [950]</b></label><button class="mem" aria-label="Temporary layer"><svg><use href="#chipo"/></svg></button></li>
      <li><span class="arrow open"></span><label><input type="checkbox" checked><svg class="rs"><use href="#checker"/></svg><b>HRSL_DSM</b></label></li>
      <li class="cls"><span class="sw c0"></span>0.0000</li>
      <li class="cls"><span class="sw c1"></span>6.8747</li>
      <li class="cls"><span class="sw c2"></span>18.3951</li>
      <li class="cls"><span class="sw c3"></span>117.1621</li>
      <li><span class="arrow open"></span><label><input type="checkbox"><svg class="rs"><use href="#checker"/></svg><em>&lt;=50</em></label></li>
      <li class="cls"><span class="sw c4"></span>0</li>
      <li class="cls"><span class="sw"></span>1</li>
    </ul>
  </section>

  <section class="canvas" aria-label="Map">
    <svg class="map" viewBox="458 161 553 536" preserveAspectRatio="xMinYMin meet">
      <defs>
        <filter id="dense" x="0" y="0" width="1" height="1" color-interpolation-filters="sRGB">
          <feTurbulence type="fractalNoise" baseFrequency=".07" numOctaves="3" seed="4"/>
          <feColorMatrix values="0 0 0 0 .14  0 0 0 0 .18  0 0 0 0 .13  18 0 0 0 -8"/>
          <feComposite in2="SourceGraphic" operator="in"/>
        </filter>
        <filter id="loose" x="0" y="0" width="1" height="1" color-interpolation-filters="sRGB">
          <feTurbulence type="fractalNoise" baseFrequency=".09" numOctaves="3" seed="9"/>
          <feColorMatrix values="0 0 0 0 .2  0 0 0 0 .28  0 0 0 0 .18  20 0 0 0 -11"/>
          <feComposite in2="SourceGraphic" operator="in"/>
        </filter>
        <filter id="rare" x="0" y="0" width="1" height="1" color-interpolation-filters="sRGB">
          <feTurbulence type="fractalNoise" baseFrequency=".08" numOctaves="3" seed="2"/>
          <feColorMatrix values="0 0 0 0 .25  0 0 0 0 .35  0 0 0 0 .22  20 0 0 0 -13.2"/>
          <feComposite in2="SourceGraphic" operator="in"/>
        </filter>
      </defs>
      <g transform="translate(630 365) scale(.33333)">
        <path d="M36 108L38 75 48 50 60 35 78 43 95 52 110 58 135 62 148 78 158 90 175 94 205 93 235 95 243 82 232 67 240 60 248 70 256 60 246 46 320 47 360 54 500 57 640 57 760 60 855 62 857 75 852 97 838 105 826 103 818 118 820 140 830 165 832 175 850 182 848 192 858 205 856 235 840 240 815 235 790 228 770 232 752 222 738 215 710 220 670 218 672 229 700 228 735 232 755 245 772 252 790 262 820 275 835 290 850 300 870 307 895 303 912 306 925 310 945 313 985 312 1010 318 1025 328 1018 315 1000 308 985 306 982 292 1000 298 1015 290 1040 295 1065 299 1085 293 1102 302 1101 358 1030 352 960 345 895 333 830 320 740 300 660 292 570 292 540 297 450 303 300 305 195 306 190 333 36 330z" fill="#85b66f" stroke="#333b2c" stroke-width="3"/>
        <path d="M300 50H840V110H300zM380 225H660V295H380zM560 140H830V210H560zM670 240L1095 355V300L830 290z" filter="url(#rare)"/>
        <path d="M280 48H400L410 72 330 80 290 65zM480 55H600L590 85 490 75zM740 62H800V90L750 80zM260 110L275 180 330 190 420 170 470 125 480 140 430 180 330 205 265 185zM350 210L465 205 460 250 380 260 390 290 330 295 200 290 180 268 340 262zM610 250L660 260 650 285 600 280zM750 250L830 285 825 315 740 290zM920 320L1000 322 1000 335 930 332zM48 60L130 65 160 95H235L262 92V130L180 175V100L44 108z" filter="url(#loose)"/>
        <path d="M54 52L75 55 65 100H50zM108 64L124 68 125 105H108zM175 100L262 94 262 112 230 142 190 170 180 260H170V100zM350 225L450 236 448 248 380 252 340 280 270 290 270 265 340 260zM285 50L330 52 325 62 290 58zM370 58H410V68L380 64zM492 60H515V72L500 78zM745 66L780 72 770 82zM60 60L100 66 98 90 84 72 70 88zM175 265L265 272 250 285 180 290zM745 275H765V287H745z" filter="url(#dense)"/>
        <path d="M190 175L205 165 225 158 240 148 250 134 262 130 270 150 258 165 262 182 285 193 310 192 335 200 348 184 365 172 395 170 420 173 450 150 470 130 495 115 530 120 560 117 600 122 640 122 655 124 680 125 700 150 740 158 780 160 800 172 840 178 848 186 830 193 800 193 785 186 770 172 740 164 710 160 690 150 675 130 650 128 630 136 600 137 570 140 540 142 528 160 525 178 515 195 490 203 465 200 440 212 400 218 360 215 358 230 355 240 340 256 330 262 290 268 265 260 240 262 215 266 195 262 180 262 185 220 197 200z" fill="#fff" stroke="#222" stroke-width="3"/>
        <path d="M172 275q16 3 16 18t-5 38h-8l8-36q0-10-11-12z" fill="#fff" stroke="#222" stroke-width="4"/>
        <path d="M845 273L875 277 890 268 905 275 910 290 895 300 870 302 858 288zM925 292L945 282 975 285 970 300 940 306z" fill="#85b66f" stroke="#222" stroke-width="4"/>
        <path d="M846 276l22 26 30 4 20-4 20 14 46-1 36 12" fill="none" stroke="#222" stroke-width="4"/>
        <path d="M36 108L38 75 60 35 110 58 135 62 158 90 175 94 235 95 243 82 232 67 240 60 248 70 256 60 246 46 320 47 360 54 640 57 855 62 857 75 852 97 838 105 826 103 818 118 820 140 832 175 852 182 865 188 875 180 885 170 905 155 925 145 945 153 965 155 985 182 975 205 940 225 918 235 915 245 925 260 950 270 970 272 980 288 1000 298 1015 290 1040 295 1065 299 1085 293 1102 302 1101 358 960 345 830 320 740 300 660 292 570 292 540 297 450 303 195 306 190 333 170 330" fill="none" stroke="#d2a02c" stroke-width="4"/>
        <path d="M960 155l15 10 10 18-8 20-30 20-29 13-1 16 14 14 30 8" fill="none" stroke="#333" stroke-width="3" stroke-dasharray="9 14"/>
        <path d="M962 175l12-6-2 12zM338 205h6v6h-6z" fill="#222"/>
      </g>
    </svg>
  </section>

  <section class="styling">
    <div class="dock-title"><h2>Layer Styling</h2><button aria-label="Float"><svg><use href="#float"/></svg></button><button aria-label="Close"><svg><use href="#close"/></svg></button></div>
    <div class="combo with-icon layer-pick"><svg><use href="#poly"/></svg><select aria-label="Layer"><option>Dissolved</option></select></div>
    <div class="styling-body">
      <div class="tabs">
        <button class="tab on"><svg><use href="#brush2"/></svg></button>
        <div class="tab-rest">
          <button class="tab"><svg><use href="#tag"/></svg></button>
          <button class="tab"><svg><use href="#abcw"/></svg></button>
          <button class="tab"><svg><use href="#cube"/></svg></button>
          <button class="tab"><svg><use href="#hist"/></svg></button>
          <button class="tab"><svg viewBox="0 0 24 24"><use href="#redo" x="1" y="0" width="15" height="15"/><use href="#undo" x="9" y="8" width="15" height="15"/></svg></button>
        </div>
      </div>
      <div class="props">
        <div class="combo with-icon"><svg><use href="#single"/></svg><select aria-label="Renderer"><option>Single Symbol</option></select></div>
        <div class="symbol">
          <div class="preview"><span></span></div>
          <ul class="symtree">
            <li class="current"><span class="arrow open"></span><span class="sw teal"></span><b>Fill</b></li>
            <li class="child"><span class="sw green"></span>Simple Fill</li>
          </ul>
          <div class="symbtns">
            <button aria-label="Add"><svg viewBox="0 0 16 16"><path d="M6 1.500h4V6h4.500v4H10v4.500H6V10H1.500V6H6z" fill="#fff" stroke="#4b8b4b"/><path d="M8 3.500v9M3.500 8h9" stroke="#4b8b4b" stroke-width="1.500"/></svg></button>
            <button class="dim" aria-label="Up"><svg viewBox="0 0 16 16"><path d="M8 2l6 11H2z" fill="#b9bcbf" stroke="#999"/></svg></button>
            <button class="dim" aria-label="Remove"><svg viewBox="0 0 16 16"><path d="M1.500 5.500h13v5h-13zM4 8h8" fill="#fff" stroke="#c88"/></svg></button>
            <button class="dim" aria-label="Down"><svg viewBox="0 0 16 16"><path d="M8 14l6-11H2z" fill="#b9bcbf" stroke="#999"/></svg></button>
            <button class="dim" aria-label="Duplicate"><svg viewBox="0 0 16 16"><path d="M1.500 4.500v10h10M4.500 1.500h10v10h-10z" fill="none" stroke="#999" stroke-width="1.500"/><path d="M10 9h4v4h-4z" fill="#ddd" stroke="#999"/></svg></button>
            <button class="dim" aria-label="Lock"><svg viewBox="0 0 16 16"><path d="M2 8h12v7H2z" fill="#aaa58c"/><path d="M6 3c0-3 7-3 7 1v4" fill="none" stroke="#999" stroke-width="2"/></svg></button>
          </div>
        </div>
        <div class="scroll-wrap">
          <div class="scroll-body">
            <div class="form">
              <label for="unit">Unit</label>
              <div class="combo"><select id="unit"><option>Millimeters</option></select></div>
              <label for="opacity">Opacity</label>
              <div class="opacity"><input id="opacity" type="range" value="100"><div class="spin"><input type="text" value="100.0 %" aria-label="Opacity value"><span><button class="up faded" aria-label="Increase"></button><button class="down" aria-label="Decrease"></button></span></div></div>
              <span>Color</span>
              <div class="color"><button class="colorbtn" aria-label="Color"><span></span></button><button class="colormenu" aria-label="Color menu"></button></div>
            </div>
            <div class="fav">
              <div class="favbox"><svg><use href="#mag"/></svg><input type="text" value="Favorites" aria-label="Symbol group"><button class="clr" aria-label="Clear"><svg><use href="#clear"/></svg></button><button class="favdrop" aria-label="Open list"></button></div>
              <button class="flat" aria-label="Style manager"><svg><use href="#style"/></svg></button>
            </div>
            <div class="symlist"><span class="s1"></span><span class="s2"></span><div class="sbar inner"><button class="up" aria-label="Scroll up"></button><i></i><button class="cut" aria-label="Scroll down"></button></div></div>
          </div>
          <div class="sbar"><button class="up" aria-label="Scroll up"></button><i></i><button class="down" aria-label="Scroll down"></button></div>
        </div>
        <button class="rendering"><span></span>Layer Rendering</button>
        <div class="actions">
          <button class="sq" aria-label="Undo"><svg><use href="#undo"/></svg></button>
          <button class="sq" aria-label="Redo"><svg><use href="#redo"/></svg></button>
          <label><input type="checkbox" checked>Live update</label>
          <button class="apply">Apply</button>
        </div>
      </div>
    </div>
  </section>
</main>

<footer class="status">
  <div class="locator">
    <div class="results">
      <h3>Processing Algorithms</h3>
      <ul>
        <li class="current"><svg><use href="#gear"/></svg>Zonal statistics</li>
        <li><svg><use href="#saga"/></svg>Zonal raster statistics</li>
        <li><svg><use href="#gear"/></svg>Raster layer zonal statistics</li>
        <li><svg><use href="#saga"/></svg>Zonal multiple regression analysis (points and predictor g...</li>
      </ul>
    </div>
    <svg><use href="#mag"/></svg><input type="text" value="zonal stat" aria-label="Locate"><button class="clr" aria-label="Clear"><svg><use href="#clear"/></svg></button>
  </div>
  <label class="coord">Coordinate <input class="field" type="text" value="125742,192185"></label>
  <svg class="mouse" viewBox="0 0 16 16"><rect x="3" y="2" width="8" height="12" rx="4" fill="#bbb" stroke="#222" transform="rotate(-20 7 8)"/><path d="M4 3l3 4M7 2l-4 5M1 14L14 5M12 2l2 2M10 13l4-2" stroke="#222"/></svg>
  <label class="scale">Scale <span class="editcombo"><input type="text" value="1:1309394"><button aria-label="Scale list"></button></span></label>
  <label class="magn"><svg class="lock" viewBox="0 0 12 16"><path d="M3 8V5c0-5 6-5 6 0v3" fill="none" stroke="#777" stroke-width="1.500"/><rect x="1" y="7" width="10" height="8" rx="1" fill="#555"/></svg>Magnifier <span class="spin"><input type="text" value="100%"><span><button class="up" aria-label="Increase"></button><button class="down" aria-label="Decrease"></button></span></span></label>
  <label class="rot">Rotation <span class="spin"><input type="text" value="0.0 °"><span><button class="up" aria-label="Increase"></button><button class="down" aria-label="Decrease"></button></span></span></label>
  <label class="render"><input type="checkbox" checked>Render</label>
  <button class="epsg"><svg viewBox="0 0 14 14"><circle cx="7" cy="6.500" r="6" fill="#aaa"/><path d="M7 .5v13M1 6.500h12M2 3.500h10M2 9.500h10" stroke="#666"/><ellipse cx="7" cy="6.500" rx="3" ry="6" fill="none" stroke="#666"/></svg>EPSG:26392</button>
  <button class="msg" aria-label="Messages"><svg viewBox="0 0 16 16"><path d="M8 1c4 0 7.500 2.200 7.500 6 0 2-.8 3.200-2 4.200V15l-3.500-2.300C4.500 13.500.5 11 .5 7 .5 3.200 4 1 8 1z" fill="#555"/><circle cx="5" cy="7" r="1" fill="#fff"/><circle cx="8" cy="7" r="1" fill="#fff"/><circle cx="11" cy="7" r="1" fill="#fff"/></svg></button>
</footer>
</body>
</html>
```
FILE: styles.css
```css
* { box-sizing: border-box; }
body {
  margin: 0;
  height: 100vh;
  display: flex;
  flex-direction: column;
  overflow: hidden;
  background: #efefef;
  color: #000;
  font: 11px/16px "Open Sans", "Noto Sans", sans-serif;
}
button, input, select { font: inherit; color: inherit; margin: 0; padding: 0; }
button { background: none; border: 0; flex: none; }
h1, h2, h3, ul { margin: 0; padding: 0; font-weight: normal; font-size: inherit; }
ul { list-style: none; }
svg { display: block; flex: none; }
.sprite { display: none; }
.paints { position: absolute; width: 0; height: 0; }

.gl-s { font: 600 7px "Open Sans", sans-serif; fill: #444; }
.gl-a { font: 600 12px "Open Sans", sans-serif; fill: #444; }
.gl-t { font: 700 15px "Liberation Serif", serif; fill: #444; }
.gl-i { font: italic 700 15px "Liberation Serif", serif; fill: #fff; }
.gl-abc { font: 700 9px "Open Sans", sans-serif; fill: #222; }
.gl-abcb { font: 700 12px "Open Sans", sans-serif; fill: #222; }
.gl-red { fill: #d00; }

/* Window chrome */
.title-bar { display: flex; align-items: center; height: 23px; flex: none; background: #fff; padding-left: 2px; }
.logo { width: 16px; height: 16px; }
.title-bar h1 { margin-left: 5px; flex: 1; }
.win-buttons { display: flex; }
.win-buttons button { width: 46px; height: 20px; display: grid; place-items: center; }
.win-buttons svg { width: 12px; height: 12px; }
.menu-bar { display: flex; align-items: center; gap: 12px; height: 20px; flex: none; padding-left: 10px; font-size: 12px; }

/* Toolbars */
.toolbar {
  display: flex;
  align-items: center;
  height: 39px;
  flex: none;
  background: linear-gradient(#fbfbfb, #ededed);
  border-bottom: 1px solid #b9b9b9;
}
.toolbar:first-of-type { border-top: 1px solid #d4d4d4; }
.toolbar.last { height: 38px; }
.grip { width: 16px; height: 18px; flex: none; padding: 0 4px 0 8px; }
.grip:first-child { width: 12px; padding-left: 4px; }
.grip::before, .grip-h::before {
  content: "";
  display: block;
  height: 100%;
  background: radial-gradient(circle at 1px 1px, #c2c2c2 1px, transparent 1px) 0 0 / 3px 3px;
}
.sep { width: 7px; height: 20px; flex: none; padding: 0 3px; }
.sep::before { content: ""; display: block; width: 1px; height: 100%; background: #d0d0d0; }
.tb { width: 33px; height: 32px; display: flex; align-items: center; justify-content: center; border: 1px solid transparent; border-radius: 3px; }
.tb svg { width: 24px; height: 24px; }
.framed { background: #fff; border-color: #c2c2c2; }
.pressed { background: #dcdcdc; border-color: #b0b0b0; }
.off svg { filter: grayscale(.9); opacity: .38; }
.drop { width: 45px; justify-content: flex-start; padding-left: 4px; }
.drop::after, .mini::after, .arrow.open::before, .combo::after, .editcombo button::after, .favdrop::after, .colormenu::after {
  content: "";
  border: 4px solid transparent;
  border-top-color: #555;
  border-bottom: 0;
  flex: none;
}
.drop::after { margin-left: 6px; }
.off::after { border-top-color: #999; }
.mini::after { border-width: 3px; border-bottom: 0; margin: 20px -6px 0 0; }
.more { margin-left: auto; padding-right: 2px; font: 700 16px/20px "Open Sans", sans-serif; }

.field, .combo, .spin, .editcombo, .favbox { background: #fff; border: 1px solid #b4b4b4; border-radius: 3px; height: 22px; }
.field { padding: 0 6px; }
.combo { position: relative; display: flex; align-items: center; background: linear-gradient(#fefefe, #efefef); }
.combo::after { position: absolute; right: 7px; top: 8px; pointer-events: none; }
.combo select { appearance: none; border: 0; background: none; flex: 1; height: 100%; padding: 1px 0 0 3px; outline: 0; }
.with-icon { height: 24px; padding-left: 5px; }
.with-icon svg { width: 16px; height: 14px; }
.with-icon select { padding-left: 2px; }
.country { width: 87px; margin: 0 2px 0 1px; }
.search-for { width: 109px; padding: 0 2px; }
.search-for::placeholder { color: #777; }

input[type="checkbox"] {
  appearance: none;
  width: 13px;
  height: 13px;
  flex: none;
  border: 1px solid #b0b0b0;
  background: #fff;
  display: grid;
  place-items: center;
}
input[type="checkbox"]:checked::after { content: ""; width: 4px; height: 8px; border: solid #000; border-width: 0 2px 2px 0; transform: rotate(38deg); margin-top: -2px; }

/* Workspace */
.workspace { flex: 1; min-height: 0; display: flex; }
.side-tools { width: 53px; flex: none; border-right: 2px solid #b9b9b9; background: linear-gradient(90deg, #fafafa, #ececec); display: flex; flex-direction: column; overflow: hidden; }
.grip-h { height: 13px; flex: none; padding: 6px 16px 1px 19px; }
.sb { height: 32px; width: 52px; display: flex; align-items: center; padding-left: 8px; }
.sb.drop::after { margin-left: 6px; }
.sb svg { width: 24px; height: 24px; }

.dock-title { display: flex; align-items: center; gap: 2px; height: 22px; flex: none; }
.dock-title h2 { flex: 1; font-size: 12px; }
.dock-title svg { width: 12px; height: 12px; }
.layers { width: 398px; flex: none; display: flex; flex-direction: column; min-height: 0; }
.layers .dock-title { padding: 0 2px 0 3px; }
.layer-tools { display: flex; align-items: center; gap: 1px; height: 29px; flex: none; padding: 0 0 3px 3px; }
.lt { width: 24px; height: 24px; display: grid; place-items: center; border: 1px solid transparent; border-radius: 2px; }
.lt svg { width: 17px; height: 17px; }
.lt.drop { width: 36px; display: flex; padding-left: 3px; }
.lt.pressed { border-color: #a9a9a9; background: #d8d8d8; }
.tree { flex: 1; min-height: 0; overflow: hidden; background: #fff; border: 1px solid #b4b4b4; border-left: 0; }
.tree li { display: flex; align-items: center; height: 18px; padding-left: 4px; }
.tree label { display: flex; align-items: center; flex: 1; }
.current { background: #efefef; }
.arrow { width: 19px; flex: none; display: flex; padding-left: 2px; }
.sw, .rs { width: 16px; height: 16px; flex: none; margin: 0 6px 0 7px; }
.rs { height: 14px; padding: 0 1px; }
.tree .cls { padding-left: 36px; }
.tree em { color: #888; font-size: 12px; font-weight: 600; }
.outline { border: 1px solid #ecd07a; }
.teal { background: #5aa08c; border: 1px solid #3f7d6d; }
.slate { background: #7e8b8f; border: 1px solid #566166; }
.green { background: #85b66f; border: 1px solid #567b48; }
.c0 { background: #a6611a; }
.c1 { background: #e8d4a6; }
.c2 { background: #a7dad2; }
.c3 { background: #018571; }
.c4 { background: #000; }
.mem { width: 18px; height: 17px; margin-right: 4px; border: 1px solid #ddd; background: #f7f7f7; color: #888; display: grid; place-items: center; }
.mem.blue { color: #7f9bb3; }
.mem svg { width: 14px; height: 14px; }

.canvas { flex: 1; min-width: 0; margin: 1px 8px 3px 6px; background: #fff; border: 1px solid #b4b4b4; }
.map { width: 100%; height: 100%; }

/* Layer styling panel */
.styling { width: 343px; flex: none; display: flex; flex-direction: column; min-height: 0; padding-left: 1px; }
.styling .dock-title { padding-left: 1px; }
.layer-pick { margin: 1px 0 6px; }
.styling-body { flex: 1; min-height: 0; display: flex; gap: 3px; padding-bottom: 5px; }
.tabs { width: 38px; flex: none; display: flex; flex-direction: column; }
.tab { height: 32px; width: 30px; display: grid; place-items: center; }
.tab svg { width: 22px; height: 22px; }
.tab.on { width: 36px; }
.tab-rest { flex: 1; background: #5c5c5c; }
.props { flex: 1; min-width: 0; display: flex; flex-direction: column; }
.symbol { display: grid; grid-template-columns: 1fr 127px 62px; gap: 6px; height: 149px; flex: none; padding: 6px 0; border-bottom: 1px solid #a0a0a0; }
.preview { display: grid; place-items: center; }
.preview span { width: 61px; height: 61px; background: #85b66f; border: 1px solid #222; }
.symtree { background: #fff; border: 1px solid #b4b4b4; }
.symtree li { display: flex; align-items: center; height: 18px; white-space: nowrap; }
.symtree .arrow { width: 16px; padding-left: 6px; }
.symtree .child { padding-left: 36px; }
.symbtns { display: grid; grid-template-columns: 28px 28px; column-gap: 6px; row-gap: 5px; align-content: start; }
.symbtns button, .sq, .apply { height: 24px; border: 1px solid #b4b4b4; border-radius: 3px; background: linear-gradient(#fff, #f0f0f0); display: grid; place-items: center; }
.symbtns svg { width: 16px; height: 16px; }
.symbtns .dim svg { opacity: .4; }
.symbtns .dim { border-color: #cfcfcf; }
.scroll-wrap { flex: 1; min-height: 0; display: flex; gap: 9px; padding-top: 8px; }
.scroll-body { flex: 1; min-width: 0; display: flex; flex-direction: column; overflow: hidden; }
.form { display: grid; grid-template-columns: 37px 1fr; grid-auto-rows: 22px; align-items: center; height: 134px; align-content: start; border-bottom: 1px solid #a0a0a0; flex: none; white-space: nowrap; }
.opacity { display: flex; align-items: center; gap: 4px; padding-left: 2px; }
.opacity input[type="range"] { appearance: none; flex: 1; min-width: 0; height: 14px; background: linear-gradient(#1478c8, #2f9bf0, #1478c8) center / 100% 5px no-repeat; }
.opacity input::-webkit-slider-thumb { appearance: none; width: 13px; height: 13px; border: 1px solid #aaa; border-radius: 3px; background: #fdfdfd; }
.spin, .editcombo { display: inline-flex; }
.opacity .spin { width: 100px; height: 20px; }
.spin input, .editcombo input { border: 0; background: none; flex: 1; min-width: 0; padding-left: 4px; outline: 0; }
.spin > span { width: 14px; border-left: 1px solid #b4b4b4; display: flex; flex-direction: column; background: #f6f6f6; }
.spin button { flex: 1; display: grid; place-items: center; }
.up::before, .down::before { content: ""; border: 4px solid transparent; }
.up::before { border-bottom-color: #555; border-top: 0; }
.down::before { border-top-color: #555; border-bottom: 0; }
.faded::before { border-bottom-color: #aaa; }
.color { display: flex; gap: 1px; }
.colorbtn { flex: 1; height: 22px; padding: 2px 4px; border: 1px solid #b4b4b4; border-radius: 3px; background: #fafafa; }
.colorbtn span { display: block; height: 16px; border-radius: 3px; background: #85b66f; }
.colormenu { width: 12px; border: 1px solid #b4b4b4; border-radius: 3px; display: grid; place-items: center; }
.colormenu::after { border-width: 4px 4px 0; }
.fav { display: flex; justify-content: space-between; padding: 6px 4px 5px 0; flex: none; }
.favbox { width: 248px; display: flex; align-items: center; padding-left: 10px; }
.favbox svg, .locator > svg { width: 13px; height: 13px; }
.favbox input { flex: 1; min-width: 0; border: 0; padding-left: 5px; outline: 0; }
.clr { padding: 0 8px; }
.favbox .clr svg, .clr svg { width: 14px; height: 12px; }
.favdrop { width: 20px; height: 100%; border-left: 1px solid #b4b4b4; display: grid; place-items: center; }
.flat svg { width: 16px; height: 16px; }
.symlist { flex: 1; min-height: 0; background: #fff; border: 1px solid #b4b4b4; border-bottom: 0; border-right: 0; display: flex; padding-left: 21px; gap: 38px; }
.s1 { width: 64px; height: 55px; margin-top: 20px; border: 1px solid #111; background: radial-gradient(circle at 0 0, #130789, #7e03a8 32%, #cc4778 52%, #f3804c 70%, #fdb32f 85%, #f0f921); }
.s2 { width: 62px; height: 53px; margin-top: 21px; background: #969696; border: 1px solid #bbb; }
.sbar { width: 14px; flex: none; display: flex; flex-direction: column; border-left: 1px solid #c4c4c4; background: linear-gradient(90deg, #fff, #f2f2f2); }
.sbar button { height: 14px; display: grid; place-items: center; }
.sbar .up { border-bottom: 1px solid #c4c4c4; }
.sbar i { flex: 1; border-bottom: 37px solid #dedede; }
.sbar.inner { margin-left: auto; border-right: 1px solid #c4c4c4; }
.sbar .cut { height: 2px; }
.sbar.inner i { border-bottom-width: 33px; }
.rendering { height: 36px; display: flex; align-items: center; gap: 8px; font-weight: 700; font-size: 12px; padding-left: 5px; padding-top: 6px; }
.rendering span { border: 6px solid transparent; border-left: 7px solid #333; border-right: 0; }
.actions { display: flex; align-items: center; gap: 6px; flex: none; }
.sq { width: 24px; }
.sq svg { width: 16px; height: 16px; }
.actions label { display: flex; align-items: center; gap: 4px; margin-left: auto; }
.apply { width: 80px; height: 21px; margin-left: 6px; }

/* Status bar and locator */
.status { height: 25px; flex: none; display: flex; align-items: center; padding-left: 4px; white-space: nowrap; }
.status label { display: flex; align-items: center; gap: 4px; }
.locator { position: relative; width: 200px; height: 22px; flex: none; margin-right: auto; display: flex; align-items: center; padding-left: 8px; background: #fff; border: 1px solid #3daee9; border-radius: 3px; }
.locator input { flex: 1; min-width: 0; border: 0; outline: 0; background: none; padding-left: 6px; }
.results { position: absolute; left: -1px; bottom: 22px; width: 683px; height: 302px; background: #fff; border: 1px solid #b4b4b4; }
.results h3 { color: #888; padding-left: 3px; }
.results li { display: flex; align-items: center; gap: 7px; height: 15px; padding-left: 3px; }
.results svg { width: 15px; height: 15px; }
.coord .field { width: 91px; padding: 0 4px; }
.mouse { width: 16px; height: 16px; margin: 0 11px 0 4px; }
.editcombo { width: 81px; }
.editcombo button { width: 18px; border-left: 1px solid #b4b4b4; display: grid; place-items: center; }
.magn { margin-left: 11px; }
.lock { width: 12px; height: 16px; margin-right: 2px; }
.magn .spin { width: 89px; }
.rot { margin-left: 8px; }
.rot .spin { width: 83px; }
.render { margin-left: 7px; }
.epsg { display: flex; align-items: center; gap: 4px; margin-left: 18px; }
.epsg svg { width: 14px; height: 14px; }
.msg { margin: 0 5px 0 18px; }
.msg svg { width: 16px; height: 16px; }
```
